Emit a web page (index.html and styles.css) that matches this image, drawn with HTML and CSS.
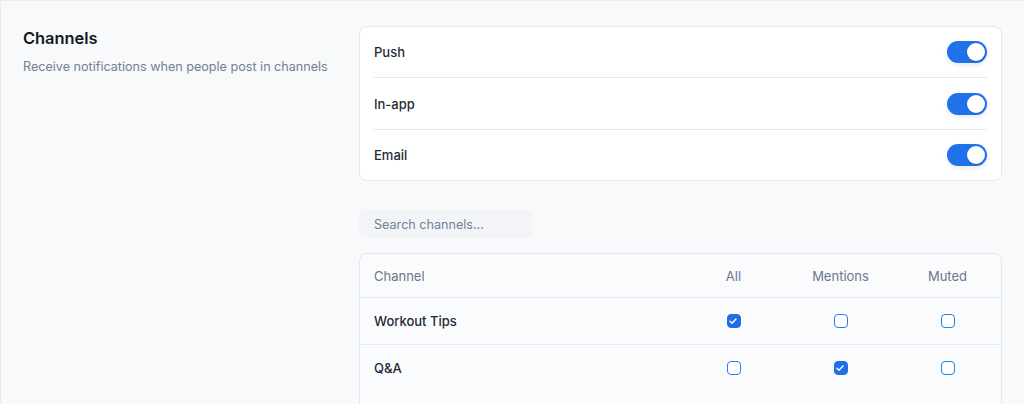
FILE: index.html
```html
<!DOCTYPE html>
<html lang="en">
<head>
<meta charset="utf-8">
<title>Channels</title>
<link rel="stylesheet" href="styles.css">
</head>
<body>
<div class="page">
  <section class="intro">
    <h2 class="title">Channels</h2>
    <p class="subtitle">Receive notifications when people post in channels</p>
  </section>
  <section class="settings">
    <div class="card">
      <div class="row"><span class="label">Push</span><span class="toggle on"><span class="knob"></span></span></div>
      <div class="row"><span class="label">In-app</span><span class="toggle on"><span class="knob"></span></span></div>
      <div class="row"><span class="label">Email</span><span class="toggle on"><span class="knob"></span></span></div>
    </div>
    <input class="search" type="text" placeholder="Search channels...">
    <div class="table">
      <div class="trow head">
        <span class="cell name">Channel</span>
        <span class="cell">All</span>
        <span class="cell">Mentions</span>
        <span class="cell">Muted</span>
      </div>
      <div class="trow">
        <span class="cell name strong">Workout Tips</span>
        <span class="cell"><span class="box checked"><svg viewBox="0 0 14 14"><path d="M4 7.3l2 2 4-4.3"/></svg></span></span>
        <span class="cell"><span class="box"></span></span>
        <span class="cell"><span class="box"></span></span>
      </div>
      <div class="trow last">
        <span class="cell name strong">Q&amp;A</span>
        <span class="cell"><span class="box"></span></span>
        <span class="cell"><span class="box checked"><svg viewBox="0 0 14 14"><path d="M4 7.3l2 2 4-4.3"/></svg></span></span>
        <span class="cell"><span class="box"></span></span>
      </div>
    </div>
  </section>
</div>
</body>
</html>
```

FILE: styles.css
```css
html, body {
  margin: 0;
  padding: 0;
  background: #f8f9fa;
}
body {
  font-family: Inter, "Noto Sans", sans-serif;
  color: #1f2937;
  overflow: hidden;
  height: 404px;
}
.page {
  box-sizing: border-box;
  height: 404px;
  overflow: hidden;
  border-top: 1px solid #e9ecef;
  border-left: 1px solid #e9ecef;
  padding: 25px 22px 0 22px;
  display: grid;
  grid-template-columns: 314px 643px;
  column-gap: 22px;
  align-items: start;
}
.title {
  margin: 0;
  font-size: 16.4px;
  line-height: 24px;
  font-weight: 600;
  color: #111827;
}
.subtitle {
  margin: 8px 0 0;
  font-size: 12.6px;
  line-height: 18px;
  color: #728096;
}
.settings {
  display: flex;
  flex-direction: column;
  align-items: flex-start;
}
.card {
  box-sizing: border-box;
  width: 643px;
  background: #fff;
  border: 1px solid #e3e8ef;
  border-radius: 8px;
  padding: 0 14px;
}
.row {
  height: 51px;
  display: flex;
  align-items: center;
  justify-content: space-between;
  border-bottom: 1px solid #e5e9ef;
}
.row:first-child {
  height: 50px;
}
.row:last-child {
  border-bottom: none;
  height: 50px;
}
.label {
  font-size: 13px;
  font-weight: 500;
  color: #1f2937;
}
.toggle {
  position: relative;
  width: 40px;
  height: 22px;
  border-radius: 11px;
  background: #d1d5db;
  box-shadow: 0 2px 5px rgba(30, 60, 110, 0.12);
}
.toggle.on {
  background: #1f72ea;
}
.knob {
  position: absolute;
  top: 2px;
  left: 2px;
  width: 18px;
  height: 18px;
  border-radius: 50%;
  background: #fff;
  box-shadow: 0 1px 2px rgba(0, 0, 0, 0.15);
}
.toggle.on .knob {
  left: 20px;
}
.search {
  box-sizing: border-box;
  margin-top: 29px;
  width: 173px;
  height: 28px;
  border: none;
  outline: none;
  border-radius: 8px;
  background: #f2f4f7;
  padding: 0 15px;
  font-family: Inter, "Noto Sans", sans-serif;
  font-size: 12.6px;
  color: #1f2937;
}
.search::placeholder {
  color: #728096;
}
.table {
  box-sizing: border-box;
  margin-top: 15px;
  width: 643px;
  height: 200px;
  border: 1px solid #e3e8ef;
  border-radius: 8px;
  background: #fafbfc;
}
.trow {
  display: grid;
  grid-template-columns: 1fr 107px 107px 107px;
  align-items: center;
  height: 46px;
  border-bottom: 1px solid #e5e9f2;
}
.trow.head {
  height: 43px;
}
.trow.last {
  border-bottom: none;
}
.cell {
  display: flex;
  justify-content: center;
  align-items: center;
  font-size: 13px;
  color: #6b778c;
}
.cell.name {
  justify-content: flex-start;
  padding-left: 14px;
}
.cell.strong {
  color: #1f2937;
  font-weight: 500;
}
.box {
  box-sizing: border-box;
  width: 14px;
  height: 14px;
  border: 1.5px solid #2b7be9;
  border-radius: 4px;
  background: #fff;
  display: flex;
}
.box.checked {
  background: #1f6fe6;
  border-color: #1f6fe6;
}
.box svg {
  width: 14px;
  height: 14px;
  margin: -1.5px;
}
.box svg path {
  fill: none;
  stroke: #fff;
  stroke-width: 1.4;
  stroke-linecap: round;
  stroke-linejoin: round;
}
```
